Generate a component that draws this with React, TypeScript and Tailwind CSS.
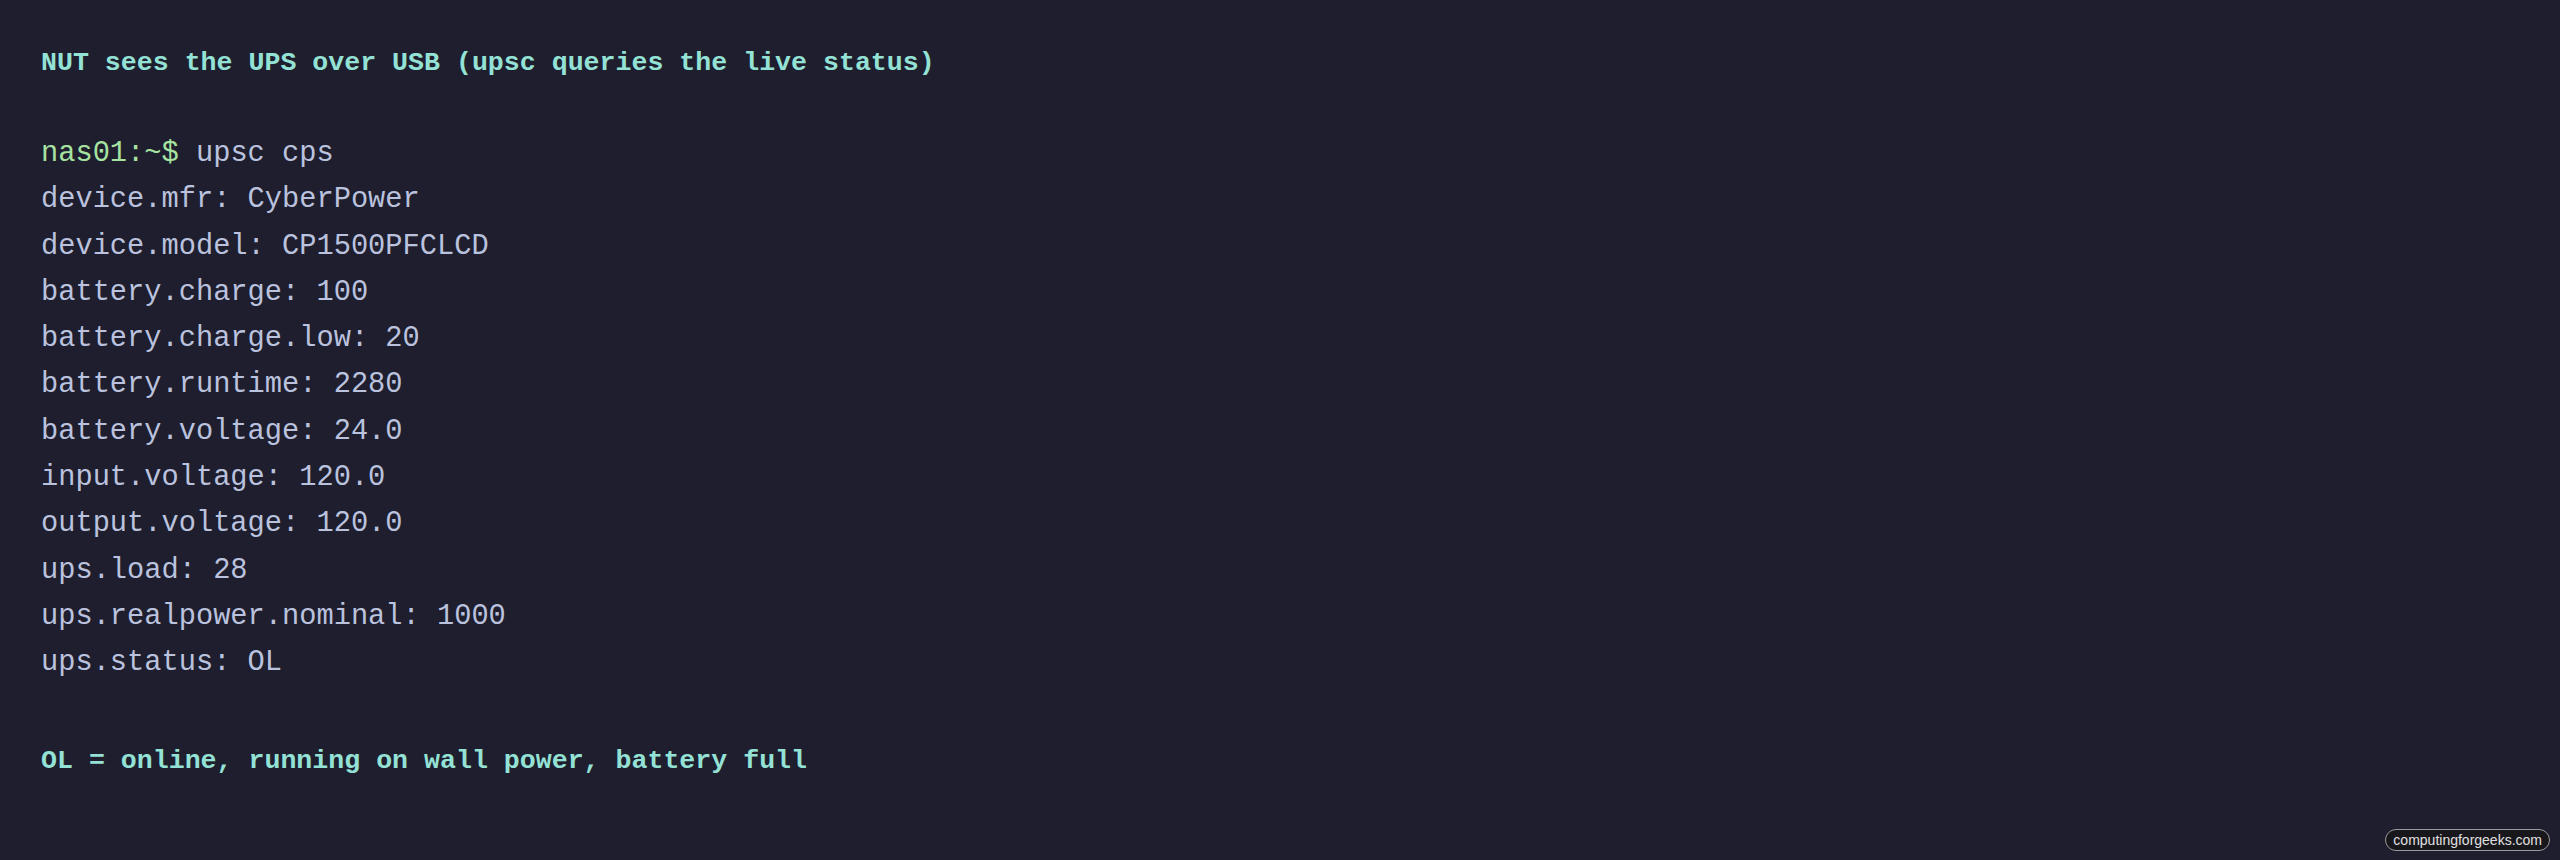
const lines = [
  "device.mfr: CyberPower",
  "device.model: CP1500PFCLCD",
  "battery.charge: 100",
  "battery.charge.low: 20",
  "battery.runtime: 2280",
  "battery.voltage: 24.0",
  "input.voltage: 120.0",
  "output.voltage: 120.0",
  "ups.load: 28",
  "ups.realpower.nominal: 1000",
  "ups.status: OL",
];

export default function App() {
  return (
    <div className="relative w-[2560px] h-[860px] overflow-hidden bg-[#1e1e2e] pl-[41px] pt-[42px] font-['Liberation_Mono',monospace]">
      <div className="text-[26.6px] leading-[43px] font-bold text-[#94e2d5] whitespace-pre">
        NUT sees the UPS over USB (upsc queries the live status)
      </div>

      <div className="mt-[46px] text-[28.7px] leading-[46.3px] text-[#bac2de] whitespace-pre">
        <div>
          <span className="text-[#a6e3a1]">nas01:~$</span> upsc cps
        </div>
        {lines.map((l) => (
          <div key={l}>{l}</div>
        ))}
      </div>

      <div className="mt-[53px] text-[26.6px] leading-[43px] font-bold text-[#94e2d5] whitespace-pre">
        OL = online, running on wall power, battery full
      </div>

      <div className="absolute right-[10px] bottom-[9px] flex h-[22px] items-center rounded-full border border-[#9a9a9a] bg-[#18181c] px-[7px] font-['Liberation_Sans',sans-serif] text-[14px] text-[#e0e0e0]">
        computingforgeeks.com
      </div>
    </div>
  );
}
